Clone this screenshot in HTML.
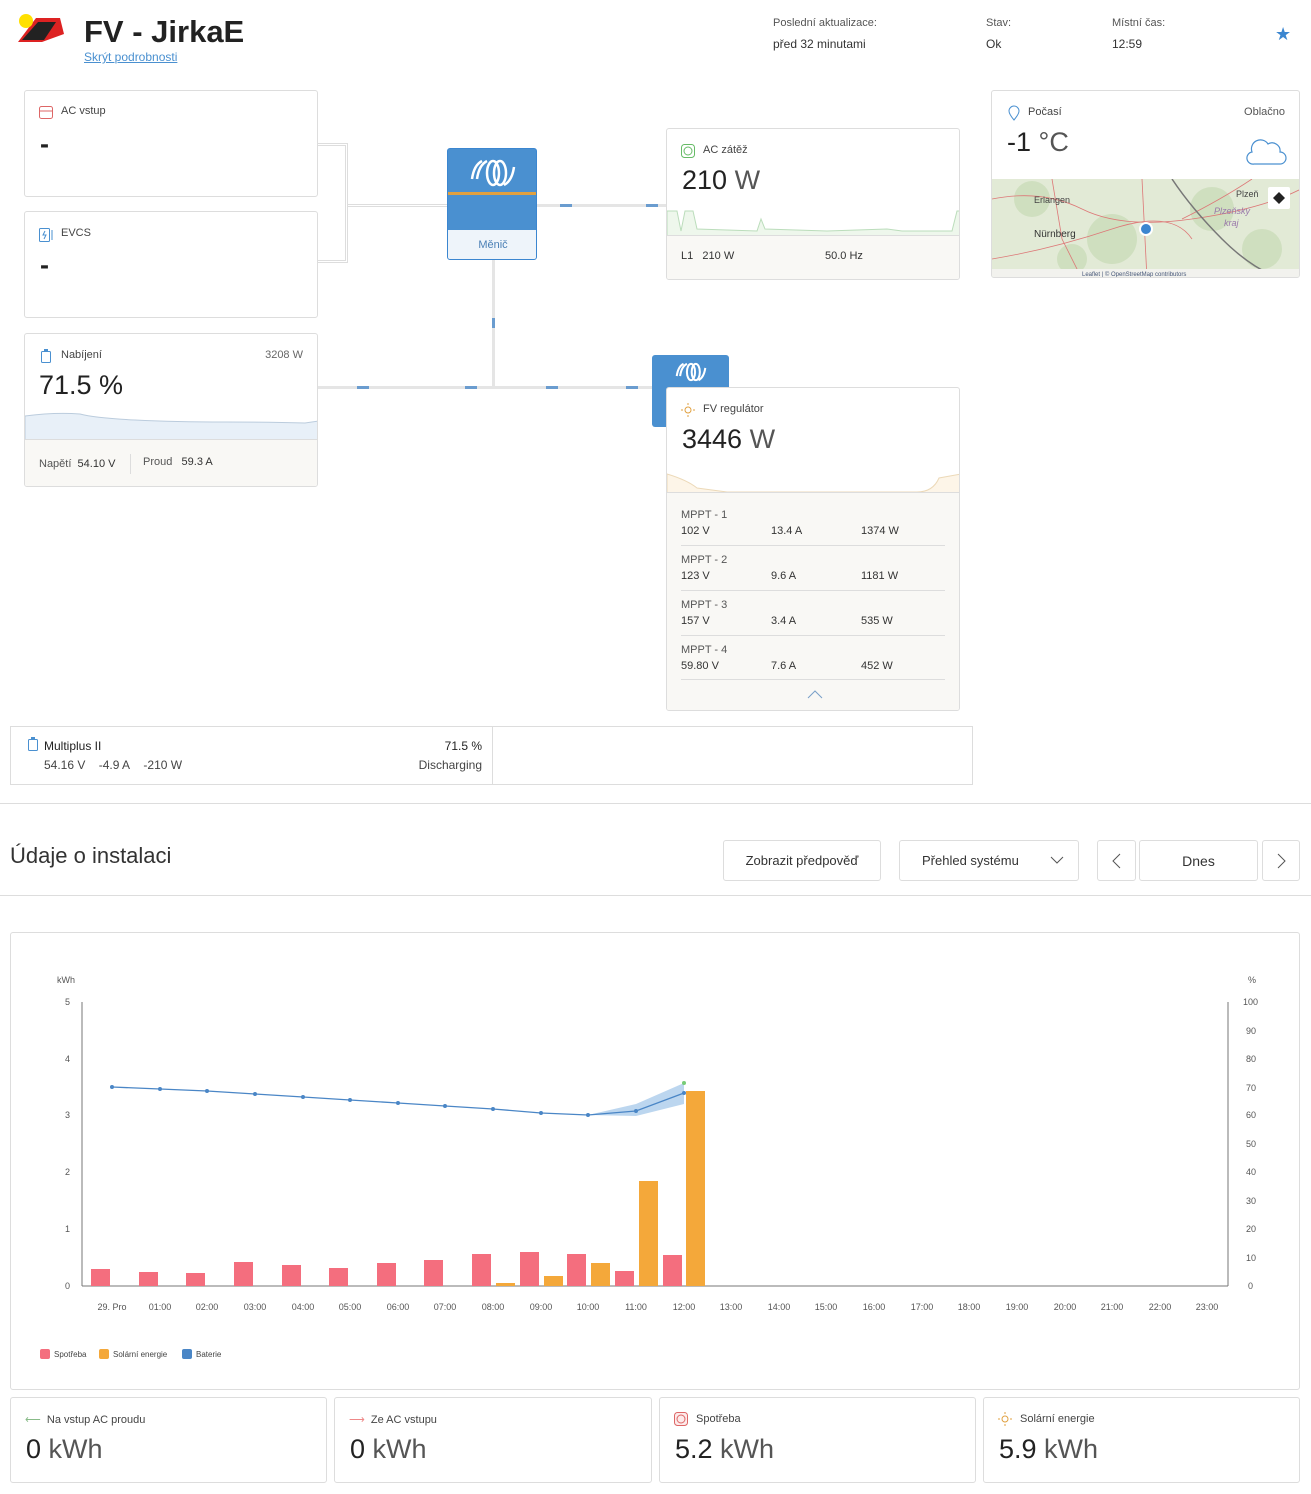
<!DOCTYPE html>
<html><head><meta charset="utf-8"><style>
*{box-sizing:border-box;margin:0;padding:0}
body{width:1311px;height:1494px;position:relative;background:#fff;font-family:"Liberation Sans",sans-serif;color:#333;overflow:hidden}
.a{position:absolute}
.card{position:absolute;background:#fff;border:1px solid #ddd;border-radius:3px;overflow:hidden}
.lbl{font-size:11px;color:#444}
.big{font-size:27px;color:#222}
.big span{color:#555}
.foot{position:absolute;left:0;right:0;bottom:0;background:#f9f8f5;border-top:1px solid #ddd}
.s{font-size:11px;color:#333}
.btn{position:absolute;border:1px solid #ddd;border-radius:3px;background:#fff;font-size:13px;color:#333;display:flex;align-items:center;justify-content:center}
.ax{font-size:9px;fill:#555;font-family:"Liberation Sans",sans-serif}
</style></head><body>

<svg class="a" style="left:14px;top:12px" width="52" height="34" viewBox="0 0 52 34"><polygon points="4,30 22,6 46,6 50,22 28,30" fill="#d22"/><polygon points="8,28 24,10 42,10 30,28" fill="#222"/><circle cx="12" cy="9" r="7" fill="#ffe000"/></svg>
<div class="a" style="left:84px;top:14px;font-size:31px;font-weight:bold;color:#222">FV - JirkaE</div>
<div class="a" style="left:84px;top:50px;font-size:12px;color:#4a90d0;text-decoration:underline">Skrýt podrobnosti</div>
<div class="a" style="left:773px;top:17px;font-size:11px;color:#555">Poslední aktualizace:</div>
<div class="a" style="left:773px;top:37px;font-size:12px;color:#333">před 32 minutami</div>
<div class="a" style="left:986px;top:17px;font-size:11px;color:#555">Stav:</div>
<div class="a" style="left:986px;top:37px;font-size:12px;color:#333">Ok</div>
<div class="a" style="left:1112px;top:17px;font-size:11px;color:#555">Místní čas:</div>
<div class="a" style="left:1112px;top:37px;font-size:12px;color:#333">12:59</div>
<div class="a" style="left:1275px;top:24px;font-size:18px;color:#3b86d0">★</div>

<div class="a" style="left:317px;top:143px;width:31px;height:120px;border:3px double #ddd;border-left:none"></div>
<div class="a" style="left:347px;top:204px;width:100px;height:3px;border-top:1px solid #ddd;border-bottom:1px solid #ddd"></div>
<div class="a" style="left:537px;top:204px;width:130px;height:3px;background:#e5e5e5"></div>
<div class="a" style="left:560px;top:204px;width:12px;height:3px;background:#6a9ccf"></div>
<div class="a" style="left:646px;top:204px;width:12px;height:3px;background:#6a9ccf"></div>
<div class="a" style="left:492px;top:259px;width:3px;height:129px;background:#e5e5e5"></div>
<div class="a" style="left:492px;top:318px;width:3px;height:10px;background:#6a9ccf"></div>
<div class="a" style="left:317px;top:386px;width:336px;height:3px;background:#e5e5e5"></div>
<div class="a" style="left:357px;top:386px;width:12px;height:3px;background:#6a9ccf"></div>
<div class="a" style="left:465px;top:386px;width:12px;height:3px;background:#6a9ccf"></div>
<div class="a" style="left:546px;top:386px;width:12px;height:3px;background:#6a9ccf"></div>
<div class="a" style="left:626px;top:386px;width:12px;height:3px;background:#6a9ccf"></div>

<div class="card" style="left:24px;top:90px;width:294px;height:107px">
<svg class="a" style="left:14px;top:15px" width="14" height="13"><rect x="0.5" y="0.5" width="13" height="12" rx="2" fill="none" stroke="#d66"/><line x1="1" y1="5" x2="13" y2="5" stroke="#d66"/></svg>
<div class="a lbl" style="left:36px;top:14px">AC vstup</div>
<div class="a big" style="left:15px;top:38px;font-weight:bold">-</div></div>
<div class="card" style="left:24px;top:211px;width:294px;height:107px">
<svg class="a" style="left:14px;top:16px" width="16" height="14"><rect x="0.5" y="0.5" width="10" height="13" rx="1" fill="none" stroke="#4a90d0"/><path d="M6 3 L4 7 H7 L5 11" stroke="#4a90d0" fill="none"/><path d="M13 2 V12" stroke="#4a90d0"/></svg>
<div class="a lbl" style="left:36px;top:15px">EVCS</div>
<div class="a big" style="left:15px;top:38px;font-weight:bold">-</div></div>
<div class="card" style="left:24px;top:333px;width:294px;height:154px">
<svg class="a" style="left:16px;top:15px" width="10" height="14"><rect x="0.5" y="2.5" width="9" height="11" rx="1" fill="none" stroke="#4a90d0"/><rect x="3" y="0" width="4" height="2" fill="#4a90d0"/></svg>
<div class="a lbl" style="left:36px;top:15px">Nabíjení</div>
<div class="a lbl" style="right:14px;top:15px;color:#666">3208 W</div>
<div class="a big" style="left:14px;top:36px">71.5 %</div>
<svg class="a" style="left:0;top:70px" width="294" height="36"><path d="M0 12 Q30 8 55 10 Q70 14 110 16 T200 18 T280 19 L294 17 V36 H0Z" fill="#e8f0f8" stroke="#bcd" stroke-width="1"/></svg>
<div class="foot" style="height:47px"><div class="a s" style="left:14px;top:18px;color:#555">Napětí&nbsp; <span style="color:#333">54.10 V</span></div><div class="a" style="left:105px;top:14px;width:1px;height:20px;background:#ddd"></div><div class="a s" style="left:118px;top:16px;color:#555">Proud&nbsp;&nbsp; <span style="color:#333">59.3 A</span></div></div></div>

<div class="a" style="left:447px;top:148px;width:90px;height:112px;border:1px solid #3b86d0;border-radius:3px;overflow:hidden;background:#4a90d0">
<svg class="a" style="left:20px;top:8px" width="50" height="32" viewBox="0 0 50 32"><g fill="none" stroke="#fff" stroke-width="2.5"><ellipse cx="25" cy="16" rx="6" ry="12"/><ellipse cx="32" cy="16" rx="6" ry="12"/><path d="M4 22 Q6 8 14 4"/><path d="M9 22 Q11 8 19 4"/><path d="M46 10 Q44 24 36 28"/></g></svg>
<div class="a" style="left:0;top:43px;width:90px;height:3px;background:#e0a040"></div>
<div class="a" style="left:0;top:81px;width:90px;height:31px;background:#eef4fa;font-size:11px;color:#4a7fb5;text-align:center;line-height:31px">Měnič</div></div>

<div class="a" style="left:652px;top:355px;width:77px;height:72px;background:#4a90d0;border-radius:3px"></div>
<svg class="a" style="left:674px;top:361px" width="34" height="22" viewBox="0 0 50 32"><g fill="none" stroke="#fff" stroke-width="3"><ellipse cx="25" cy="16" rx="6" ry="12"/><ellipse cx="32" cy="16" rx="6" ry="12"/><path d="M4 22 Q6 8 14 4"/><path d="M9 22 Q11 8 19 4"/><path d="M46 10 Q44 24 36 28"/></g></svg>

<div class="card" style="left:666px;top:128px;width:294px;height:152px">
<svg class="a" style="left:14px;top:15px" width="14" height="14"><rect x="0.5" y="0.5" width="13" height="13" rx="3" fill="none" stroke="#6b6"/><circle cx="7" cy="7" r="4" fill="none" stroke="#6b6"/></svg>
<div class="a lbl" style="left:36px;top:15px">AC zátěž</div>
<div class="a big" style="left:15px;top:36px">210 <span>W</span></div>
<svg class="a" style="left:0;top:74px" width="294" height="34"><path d="M0 8 L10 8 L14 28 L18 8 L26 8 L30 26 L90 28 L94 16 L98 26 L160 28 L220 26 L235 28 L285 28 L290 8 L294 8 V34 H0Z" fill="#eef7ec" stroke="#bdb" /></svg>
<div class="foot" style="height:44px"><div class="a s" style="left:14px;top:14px">L1&nbsp;&nbsp; 210 W</div><div class="a s" style="left:158px;top:14px">50.0 Hz</div></div></div>

<div class="card" style="left:991px;top:90px;width:309px;height:188px">
<svg class="a" style="left:16px;top:14px" width="12" height="16"><path d="M6 15 C1 9 1 7 1 6 A5 5 0 0 1 11 6 C11 7 11 9 6 15Z" fill="none" stroke="#4a90d0"/></svg>
<div class="a lbl" style="left:36px;top:15px">Počasí</div>
<div class="a lbl" style="right:14px;top:15px;color:#555">Oblačno</div>
<div class="a big" style="left:15px;top:36px">-1 <span>°C</span></div>
<svg class="a" style="left:254px;top:47px" width="42" height="28"><path d="M8 26 A6 6 0 0 1 6 14 A9 9 0 0 1 22 6 A8 8 0 0 1 34 14 A6 6 0 0 1 34 26 Z" fill="none" stroke="#4a90d0" stroke-width="1.2"/></svg>
<div class="a" style="left:0;top:88px;width:309px;height:100px;background:#dfe8d2">
<svg width="309" height="100"><rect width="309" height="100" fill="#e2ead6"/><g fill="#cfdfbf"><circle cx="40" cy="20" r="18"/><circle cx="120" cy="60" r="25"/><circle cx="220" cy="30" r="22"/><circle cx="270" cy="70" r="20"/><circle cx="80" cy="80" r="15"/></g><g stroke="#d77" fill="none" stroke-width="0.8"><path d="M0 20 Q50 10 90 30 T200 40 T309 10"/><path d="M60 0 L70 60 L90 100"/><path d="M0 80 Q60 70 120 50 T200 60"/><path d="M150 0 L155 100"/><path d="M190 40 Q230 20 260 0"/></g><path d="M180 0 Q200 30 230 60 T290 100" stroke="#777" fill="none" stroke-width="1.5"/><text x="42" y="24" font-size="9" fill="#444" font-family="Liberation Sans">Erlangen</text><text x="42" y="58" font-size="10" fill="#333" font-family="Liberation Sans">Nürnberg</text><text x="244" y="18" font-size="9" fill="#444" font-family="Liberation Sans">Plzeň</text><text x="222" y="35" font-size="9" fill="#97a" font-style="italic" font-family="Liberation Sans">Plzeňský</text><text x="232" y="47" font-size="9" fill="#97a" font-style="italic" font-family="Liberation Sans">kraj</text><circle cx="154" cy="50" r="6" fill="#3b86d0" stroke="#fff" stroke-width="2"/><rect x="276" y="8" width="22" height="22" fill="#fff" rx="2"/><path d="M287 13 L293 19 L287 25 L281 19Z" fill="#222"/><rect x="0" y="90" width="309" height="10" fill="#f2f2ee"/><text x="90" y="97" font-size="6" fill="#457" font-family="Liberation Sans">Leaflet | © OpenStreetMap contributors</text></svg></div></div>

<div class="card" style="left:666px;top:387px;width:294px;height:324px">
<svg class="a" style="left:14px;top:15px" width="14" height="14"><circle cx="7" cy="7" r="3" fill="none" stroke="#e0a040"/><g stroke="#e0a040"><line x1="7" y1="0" x2="7" y2="2"/><line x1="7" y1="12" x2="7" y2="14"/><line x1="0" y1="7" x2="2" y2="7"/><line x1="12" y1="7" x2="14" y2="7"/></g></svg>
<div class="a lbl" style="left:36px;top:15px">FV regulátor</div>
<div class="a big" style="left:15px;top:36px">3446 <span>W</span></div>
<svg class="a" style="left:0;top:82px" width="294" height="24"><path d="M0 4 Q20 10 30 18 L60 22 L250 22 Q266 22 272 8 L294 4 V24 H0Z" fill="#fdf5e8" stroke="#ecd9b8"/></svg>
<div class="foot" style="height:218px">
<div class="a" style="left:14px;top:14px;width:264px;font-size:11px;line-height:16px">
<div style="height:39px;border-bottom:1px solid #ddd;color:#333"><div style="color:#555">MPPT - 1</div><span style="display:inline-block;width:90px">102 V</span><span style="display:inline-block;width:90px">13.4 A</span>1374 W</div>
<div style="height:45px;border-bottom:1px solid #ddd;padding-top:6px"><div style="color:#555">MPPT - 2</div><span style="display:inline-block;width:90px">123 V</span><span style="display:inline-block;width:90px">9.6 A</span>1181 W</div>
<div style="height:45px;border-bottom:1px solid #ddd;padding-top:6px"><div style="color:#555">MPPT - 3</div><span style="display:inline-block;width:90px">157 V</span><span style="display:inline-block;width:90px">3.4 A</span>535 W</div>
<div style="height:44px;border-bottom:1px solid #ddd;padding-top:6px"><div style="color:#555">MPPT - 4</div><span style="display:inline-block;width:90px">59.80 V</span><span style="display:inline-block;width:90px">7.6 A</span>452 W</div>
</div>
<svg class="a" style="left:140px;top:197px" width="16" height="9"><path d="M1 8 L8 1 L15 8" fill="none" stroke="#7aa0c8"/></svg>
</div></div>

<div class="a" style="left:10px;top:726px;width:963px;height:59px;border:1px solid #ddd">
<div class="a" style="left:481px;top:0;width:1px;height:57px;background:#ddd"></div>
<svg class="a" style="left:17px;top:10px" width="10" height="14"><rect x="0.5" y="2.5" width="9" height="11" rx="1" fill="none" stroke="#4a90d0"/><rect x="3" y="0" width="4" height="2" fill="#4a90d0"/></svg>
<div class="a" style="left:33px;top:12px;font-size:12px;color:#222">Multiplus II</div>
<div class="a" style="left:33px;top:31px;font-size:12px;color:#444">54.16 V&nbsp;&nbsp;&nbsp; -4.9 A&nbsp;&nbsp;&nbsp; -210 W</div>
<div class="a" style="right:490px;top:12px;font-size:12px;color:#222">71.5 %</div>
<div class="a" style="right:490px;top:31px;font-size:12px;color:#444">Discharging</div></div>

<div class="a" style="left:0;top:803px;width:1311px;height:1px;background:#ddd"></div>
<div class="a" style="left:10px;top:843px;font-size:22px;color:#333">Údaje o instalaci</div>
<div class="btn" style="left:723px;top:840px;width:158px;height:41px">Zobrazit předpověď</div>
<div class="btn" style="left:899px;top:840px;width:180px;height:41px;justify-content:flex-start;padding-left:22px">Přehled systému<svg class="a" style="left:150px;top:15px" width="14" height="9"><path d="M1 1 L7 7 L13 1" fill="none" stroke="#555"/></svg></div>
<div class="btn" style="left:1097px;top:840px;width:39px;height:41px"><svg width="9" height="16"><path d="M8 1 L1 8 L8 15" fill="none" stroke="#555"/></svg></div>
<div class="btn" style="left:1139px;top:840px;width:119px;height:41px;font-size:14px">Dnes</div>
<div class="btn" style="left:1262px;top:840px;width:38px;height:41px"><svg width="9" height="16"><path d="M1 1 L8 8 L1 15" fill="none" stroke="#555"/></svg></div>
<div class="a" style="left:0;top:895px;width:1311px;height:1px;background:#ddd"></div>

<div class="a" style="left:10px;top:932px;width:1290px;height:458px;border:1px solid #ddd;border-radius:3px"></div>
<svg class="a" style="left:0;top:0" width="1311" height="1494" viewBox="0 0 1311 1494">
<text class="ax" x="57" y="983">kWh</text><text class="ax" x="1248" y="983">%</text>
<g class="ax" text-anchor="end"><text x="70" y="1005">5</text><text x="70" y="1062">4</text><text x="70" y="1118">3</text><text x="70" y="1175">2</text><text x="70" y="1232">1</text><text x="70" y="1289">0</text></g>
<g class="ax"><text x="1243" y="1005">100</text><text x="1246" y="1034">90</text><text x="1246" y="1062">80</text><text x="1246" y="1091">70</text><text x="1246" y="1118">60</text><text x="1246" y="1147">50</text><text x="1246" y="1175">40</text><text x="1246" y="1204">30</text><text x="1246" y="1232">20</text><text x="1246" y="1261">10</text><text x="1248" y="1289">0</text></g>
<line x1="82" y1="1002" x2="82" y2="1286" stroke="#777"/><line x1="1228" y1="1002" x2="1228" y2="1286" stroke="#777"/><line x1="82" y1="1286" x2="1228" y2="1286" stroke="#777"/>
<g fill="#f46e7e">
<rect x="91" y="1269" width="19" height="17"/><rect x="139" y="1272" width="19" height="14"/><rect x="186" y="1273" width="19" height="13"/><rect x="234" y="1262" width="19" height="24"/><rect x="282" y="1265" width="19" height="21"/><rect x="329" y="1268" width="19" height="18"/><rect x="377" y="1263" width="19" height="23"/><rect x="424" y="1260" width="19" height="26"/><rect x="472" y="1254" width="19" height="32"/><rect x="520" y="1252" width="19" height="34"/><rect x="567" y="1254" width="19" height="32"/><rect x="615" y="1271" width="19" height="15"/><rect x="663" y="1255" width="19" height="31"/></g>
<g fill="#f4a83a"><rect x="496" y="1283" width="19" height="3"/><rect x="544" y="1276" width="19" height="10"/><rect x="591" y="1263" width="19" height="23"/><rect x="639" y="1181" width="19" height="105"/><rect x="686" y="1091" width="19" height="195"/></g>
<path d="M588 1115 L636 1104 L684 1083 L684 1104 L636 1116 Z" fill="#bcd6ef"/>
<polyline points="112,1087 160,1089 207,1091 255,1094 303,1097 350,1100 398,1103 445,1106 493,1109 541,1113 588,1115 636,1111 684,1093" fill="none" stroke="#4a86c6" stroke-width="1.3"/>
<g fill="#4a86c6"><circle cx="112" cy="1087" r="2"/><circle cx="160" cy="1089" r="2"/><circle cx="207" cy="1091" r="2"/><circle cx="255" cy="1094" r="2"/><circle cx="303" cy="1097" r="2"/><circle cx="350" cy="1100" r="2"/><circle cx="398" cy="1103" r="2"/><circle cx="445" cy="1106" r="2"/><circle cx="493" cy="1109" r="2"/><circle cx="541" cy="1113" r="2"/><circle cx="588" cy="1115" r="2"/><circle cx="636" cy="1111" r="2"/><circle cx="684" cy="1093" r="2"/></g><circle cx="684" cy="1083" r="2" fill="#7c7"/>
<g class="ax" text-anchor="middle">
<text x="112" y="1310">29. Pro</text><text x="160" y="1310">01:00</text><text x="207" y="1310">02:00</text><text x="255" y="1310">03:00</text><text x="303" y="1310">04:00</text><text x="350" y="1310">05:00</text><text x="398" y="1310">06:00</text><text x="445" y="1310">07:00</text><text x="493" y="1310">08:00</text><text x="541" y="1310">09:00</text><text x="588" y="1310">10:00</text><text x="636" y="1310">11:00</text><text x="684" y="1310">12:00</text><text x="731" y="1310">13:00</text><text x="779" y="1310">14:00</text><text x="826" y="1310">15:00</text><text x="874" y="1310">16:00</text><text x="922" y="1310">17:00</text><text x="969" y="1310">18:00</text><text x="1017" y="1310">19:00</text><text x="1065" y="1310">20:00</text><text x="1112" y="1310">21:00</text><text x="1160" y="1310">22:00</text><text x="1207" y="1310">23:00</text></g>
<rect x="40" y="1349" width="10" height="10" rx="2" fill="#f46e7e"/><rect x="99" y="1349" width="10" height="10" rx="2" fill="#f4a83a"/><rect x="182" y="1349" width="10" height="10" rx="2" fill="#4a86c6"/>
<g font-size="8" fill="#444" font-family="Liberation Sans"><text x="54" y="1357">Spotřeba</text><text x="113" y="1357">Solární energie</text><text x="196" y="1357">Baterie</text></g>
</svg>

<div class="card" style="left:10px;top:1397px;width:317px;height:86px"><div class="a lbl" style="left:14px;top:15px"><span style="color:#8b8">⟵</span>&nbsp; Na vstup AC proudu</div><div class="a big" style="left:15px;top:36px">0 <span>kWh</span></div></div>
<div class="card" style="left:334px;top:1397px;width:318px;height:86px"><div class="a lbl" style="left:14px;top:15px"><span style="color:#e88">⟶</span>&nbsp; Ze AC vstupu</div><div class="a big" style="left:15px;top:36px">0 <span>kWh</span></div></div>
<div class="card" style="left:659px;top:1397px;width:317px;height:86px"><svg class="a" style="left:14px;top:14px" width="14" height="14"><rect x="0.5" y="0.5" width="13" height="13" rx="3" fill="#fdeaea" stroke="#d66"/><circle cx="7" cy="7" r="4" fill="none" stroke="#d66"/></svg><div class="a lbl" style="left:36px;top:15px">Spotřeba</div><div class="a big" style="left:15px;top:36px">5.2 <span>kWh</span></div></div>
<div class="card" style="left:983px;top:1397px;width:317px;height:86px"><svg class="a" style="left:14px;top:14px" width="14" height="14"><circle cx="7" cy="7" r="3" fill="none" stroke="#e0a040"/><g stroke="#e0a040"><line x1="7" y1="0" x2="7" y2="2"/><line x1="7" y1="12" x2="7" y2="14"/><line x1="0" y1="7" x2="2" y2="7"/><line x1="12" y1="7" x2="14" y2="7"/></g></svg><div class="a lbl" style="left:36px;top:15px">Solární energie</div><div class="a big" style="left:15px;top:36px">5.9 <span>kWh</span></div></div>
</body></html>
